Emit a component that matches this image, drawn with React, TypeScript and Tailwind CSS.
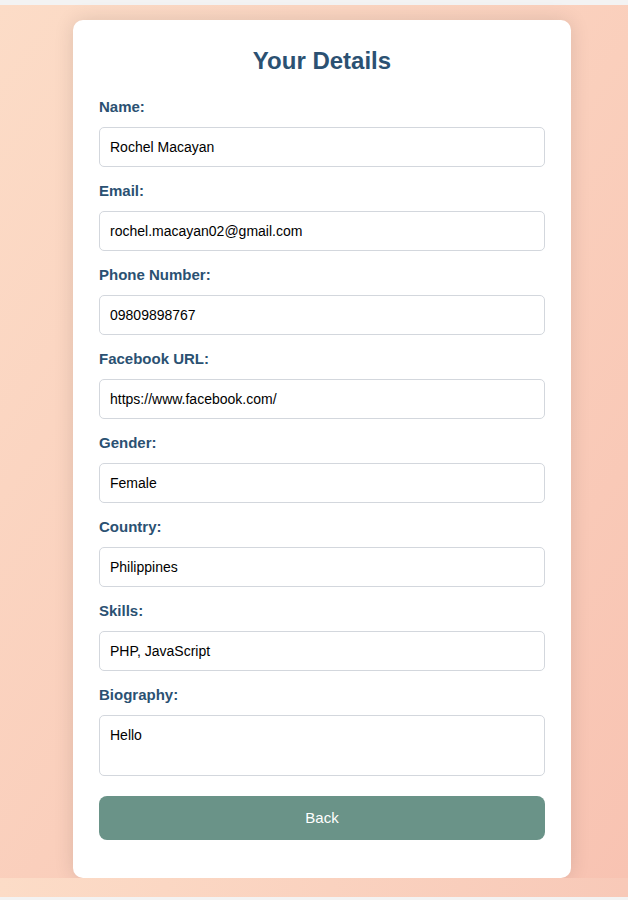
const fields = [
  { label: 'Name:', value: 'Rochel Macayan' },
  { label: 'Email:', value: 'rochel.macayan02@gmail.com' },
  { label: 'Phone Number:', value: '09809898767' },
  { label: 'Facebook URL:', value: 'https://www.facebook.com/' },
  { label: 'Gender:', value: 'Female' },
  { label: 'Country:', value: 'Philippines' },
  { label: 'Skills:', value: 'PHP, JavaScript' },
];

export default function App() {
  return (
    <div className="min-h-[900px] bg-[#f3f3f3] pt-[5px] font-['Liberation_Sans',Arial,sans-serif]">
      <div className="h-[873px] bg-gradient-to-br from-[#fcdcc7] to-[#f8c3b2] pt-[15px] pl-[73px]">
        <div className="w-[498px] h-[858px] rounded-[10px] bg-white px-[26px] pt-[25px] shadow-[0_0_20px_rgba(0,0,0,0.12)]">
          <h2 className="text-center text-[24px] leading-[32px] font-bold text-[#2b5172] mb-[21px]">Your Details</h2>
          {fields.map((f) => (
            <div key={f.label} className="mb-[15px]">
              <div className="text-[15px] leading-[18px] font-bold text-[#2b5172] mb-[11px]">{f.label}</div>
              <div className="h-[40px] flex items-center rounded-[5px] border border-[#d3d7dd] px-[10px] text-[14px] text-black">
                {f.value}
              </div>
            </div>
          ))}
          <div className="mb-[20px]">
            <div className="text-[15px] leading-[18px] font-bold text-[#2b5172] mb-[11px]">Biography:</div>
            <div className="h-[61px] rounded-[5px] border border-[#d3d7dd] px-[10px] pt-[10px] text-[14px] leading-[18px] text-black">
              Hello
            </div>
          </div>
          <button className="w-full h-[44px] rounded-[8px] bg-[#6a9388] text-white text-[15px]">Back</button>
        </div>
      </div>
      <div className="h-[19px] bg-gradient-to-r from-[#fcdcc7] to-[#f8c9b8]" />
    </div>
  );
}
